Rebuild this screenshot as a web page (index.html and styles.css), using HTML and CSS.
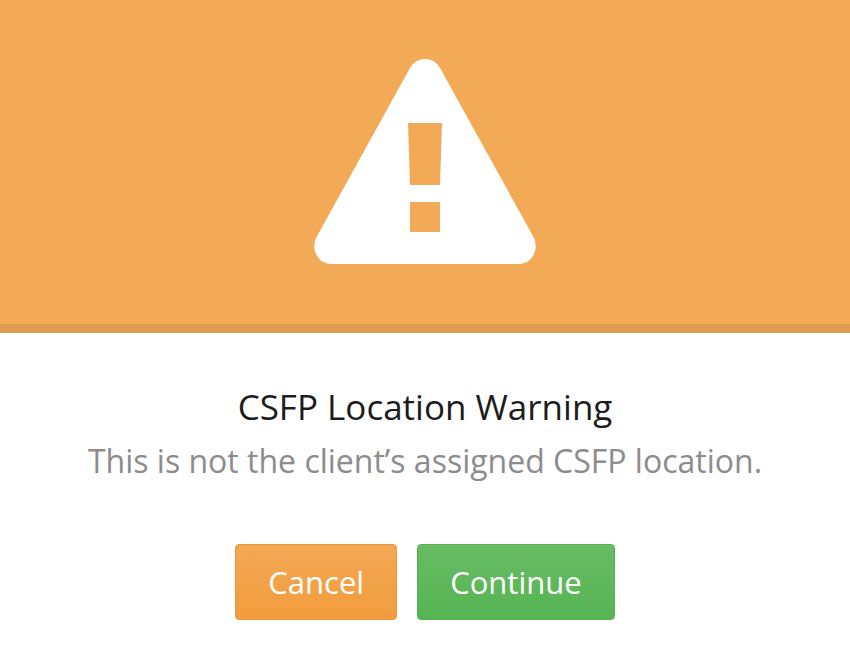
FILE: index.html
```html
<!DOCTYPE html>
<html lang="en">
<head>
<meta charset="utf-8">
<title>CSFP Location Warning</title>
<link rel="stylesheet" href="styles.css">
</head>
<body>
<main class="dialog" role="alertdialog" aria-labelledby="title" aria-describedby="message">
  <header class="banner">
    <svg class="icon" viewBox="0 0 224 208" aria-hidden="true">
      <path fill="#fff" fill-rule="evenodd" d="M97 10Q102 1 112 1Q122 1 127 10L221 180Q225 190 220 198Q215 206 205 206H19Q9 206 4 198Q-1 190 3 180ZM95 65L97 127H127L129 65ZM97 144V174H127V144Z"/>
    </svg>
  </header>
  <section class="content">
    <h1 class="title" id="title">CSFP Location Warning</h1>
    <p class="message" id="message">This is not the client’s assigned CSFP location.</p>
    <div class="actions">
      <button class="button cancel" type="button">Cancel</button>
      <button class="button continue" type="button">Continue</button>
    </div>
  </section>
</main>
</body>
</html>
```
FILE: styles.css
```css
* {
  box-sizing: border-box;
}

body {
  margin: 0;
  background: #fff;
  font-family: "Open Sans", sans-serif;
}

.banner {
  display: flex;
  justify-content: center;
  padding: 58px 24px;
  background: #f3aa56;
  border-bottom: 9px solid #df9c50;
}

.icon {
  display: block;
  width: 224px;
  height: 208px;
}

.content {
  padding: 48px 24px;
  text-align: center;
}

.title {
  margin: 0;
  color: #1c1c1c;
  font-size: 35px;
  font-weight: 400;
  line-height: 52px;
}

.message {
  margin: 4px 0 0;
  color: #8c8c8c;
  font-size: 32px;
  line-height: 48px;
}

.actions {
  display: flex;
  justify-content: center;
  gap: 20px;
  margin-top: 59px;
}

.button {
  height: 76px;
  padding: 0 32px;
  border: 1px solid;
  border-radius: 4px;
  color: #fff;
  font: 400 31px/40px "Open Sans", sans-serif;
}

.cancel {
  border-color: #e6963f;
  background: linear-gradient(#f2a855, #f39c3d);
}

.continue {
  border-color: #55b054;
  background: linear-gradient(#68bc64, #56b453);
}
```
